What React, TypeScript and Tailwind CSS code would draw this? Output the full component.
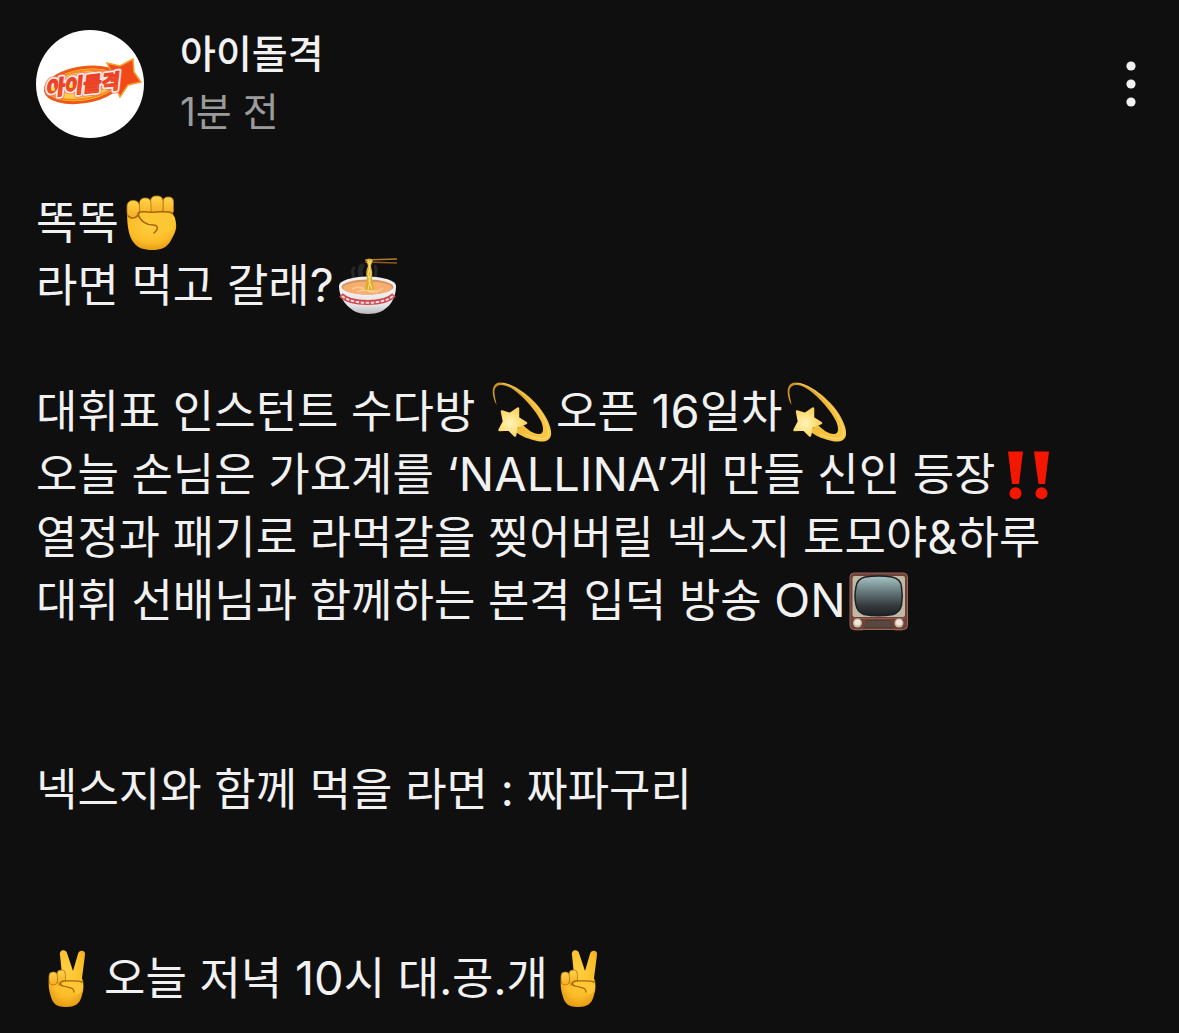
import type { ReactNode } from 'react';

function Emoji({ label, children }: { label: string; children: ReactNode }) {
  return (
    <svg
      role="img"
      aria-label={label}
      viewBox="0 0 63 63"
      className="mr-1 ml-px inline-block h-[63px] w-[63px] align-top"
    >
      {children}
    </svg>
  );
}

// Latin letters and digits run slightly larger than the Hangul around them
function Latin({ children }: { children: ReactNode }) {
  return <span className="text-[47px] leading-none">{children}</span>;
}

function Defs() {
  return (
    <svg className="absolute h-0 w-0" aria-hidden="true">
      <defs>
        <radialGradient id="skin" cx="0.5" cy="0.35" r="0.7">
          <stop offset="0" stopColor="#ffd043" />
          <stop offset="0.65" stopColor="#fcbd28" />
          <stop offset="1" stopColor="#e39512" />
        </radialGradient>
        <linearGradient id="finger" x1="0" y1="0" x2="0" y2="1">
          <stop offset="0" stopColor="#ffd54c" />
          <stop offset="1" stopColor="#f4ac20" />
        </linearGradient>
        <linearGradient id="tail" x1="0" y1="0" x2="1" y2="1">
          <stop offset="0" stopColor="#c98d1f" />
          <stop offset="0.5" stopColor="#f0b935" />
          <stop offset="1" stopColor="#fbcb4b" />
        </linearGradient>
        <radialGradient id="star" cx="0.4" cy="0.55" r="0.6">
          <stop offset="0" stopColor="#fff3bd" />
          <stop offset="0.5" stopColor="#ffe487" />
          <stop offset="1" stopColor="#fad05a" />
        </radialGradient>
        <linearGradient id="bowl" x1="0" y1="0" x2="0" y2="1">
          <stop offset="0" stopColor="#f4f4f4" />
          <stop offset="0.7" stopColor="#e3e3e5" />
          <stop offset="1" stopColor="#b9b9be" />
        </linearGradient>
        <linearGradient id="screen" x1="0" y1="0" x2="0" y2="1">
          <stop offset="0" stopColor="#a9c6c8" />
          <stop offset="0.35" stopColor="#6d8285" />
          <stop offset="0.75" stopColor="#34393c" />
          <stop offset="1" stopColor="#1f2224" />
        </linearGradient>
        <linearGradient id="lettering" x1="0" y1="0" x2="0" y2="1">
          <stop offset="0" stopColor="#e8322a" />
          <stop offset="1" stopColor="#f4601c" />
        </linearGradient>
      </defs>
    </svg>
  );
}

function Fist() {
  return (
    <Emoji label="✊">
      <path
        d="M7 20C7 36 9 46 14 52C18 57 24 59 32 59C41 59 46 57 50 51C54 44 57 39 56 32C55 26 53 22 49 20Z"
        fill="url(#skin)"
      />
      <g fill="url(#finger)" stroke="#b87410" strokeWidth="0.8">
        <rect x="43" y="6" width="10.500" height="18" rx="4.500" />
        <rect x="30.500" y="5" width="12.500" height="18" rx="5" />
        <rect x="19.500" y="7" width="11.500" height="18" rx="5" />
        <rect x="7" y="9.500" width="12.500" height="17" rx="5.500" />
      </g>
      <path
        d="M20 24C20 19 26 20 34 21C42 21 52 20 55 27C56 32 54 38 50 41L39 42C41 37 39 35 35 35C29 34 20 30 20 24Z"
        fill="#fdc633"
      />
      <path
        d="M18 23C20 30 26 34 33 34C38 34 39 38 34 42M18 22C22 19 29 22 36 21C42 21 48 20 52 22M8 25C11 28 15 28 18 24"
        fill="none"
        stroke="#a9650c"
        strokeWidth="1.500"
        strokeLinecap="round"
      />
    </Emoji>
  );
}

function Noodles() {
  return (
    <Emoji label="🍜">
      <g transform="translate(2 0)">
        <g fill="none" stroke="#555" strokeLinecap="round" opacity="0.35">
          <path d="M17 14C13 17 18 20 16 24" strokeWidth="3" />
          <path d="M25 12C21 15 25 20 23 24" strokeWidth="5" />
          <path d="M38 12C41 16 37 20 39 24" strokeWidth="3" />
        </g>
        <path
          d="M2 32C2 45 11 54 19 58C25 60.500 37 60.500 43 58C52 54 59 45 59 32Z"
          fill="url(#bowl)"
        />
        <ellipse cx="30.500" cy="32" rx="28.500" ry="9.500" fill="#f1f1f2" />
        <ellipse cx="30.500" cy="33" rx="26" ry="7.500" fill="#d8935f" />
        <ellipse cx="30.500" cy="34" rx="24.500" ry="6.500" fill="#f6ae70" />
        <path
          d="M15 35Q22 31 29 36T46 34M20 38Q29 34 41 38"
          fill="none"
          stroke="#ffcb8c"
          strokeWidth="1.500"
        />
        <path d="M4 41C14 51 47 51 57 41" fill="none" stroke="#cf4650" strokeWidth="5" />
        <path
          d="M5 42C15 51 46 51 56 42"
          fill="none"
          stroke="#f0dcdc"
          strokeWidth="2"
          strokeDasharray="3.500 1.500"
        />
        <path d="M28 6L60 5" stroke="#b47a32" strokeWidth="1.600" />
        <path d="M28 8L60 9" stroke="#8d5a21" strokeWidth="1.600" />
        <path
          d="M29 6Q32 3 36 6L34 12Q36 18 35 24L37 36H28L30 24Q28 18 31 12Z"
          fill="#d9ac2c"
        />
        <path
          d="M31 6L33 13L31 20L33 27L31 36M34 6L32 13L34 20L32 27L35 35"
          fill="none"
          stroke="#f8e27a"
          strokeWidth="1.100"
        />
      </g>
    </Emoji>
  );
}

function Dizzy() {
  return (
    <Emoji label="💫">
      <g transform="translate(1 0)">
        <path
          d="M6.500 25C1 15 1 3 10 2.500C22 2 39 15 49 27C57 37 62 48 61 55C60 61 54 62.500 47 61C39 59 32 57 26 52L31 43C38 50 43 54 49 54C54 54 54 48 51 41C46 31 35 18 24 10C15 3.500 6 3 4.500 10C4 16 6 20 6.500 25Z"
          fill="url(#tail)"
        />
        <path
          d="M12 3.500C24 4 40 18 49 30C56 40 60 51 58 56C55 61 43 58 35 54"
          fill="none"
          stroke="#ffe88c"
          strokeWidth="1"
          opacity="0.7"
        />
        <path
          d="M12 31.500L20 34L28 28.500L28 38L36 43L27 46.500L25 55.500L19 49.500L9.500 50L14 41.500Z"
          fill="url(#star)"
          stroke="url(#star)"
          strokeWidth="2.500"
          strokeLinejoin="round"
        />
      </g>
    </Emoji>
  );
}

function DoubleBang() {
  return (
    <Emoji label="‼️">
      <g fill="#f51600">
        <path d="M11 8.500H26L22 41H15Z" />
        <path d="M37 8.500H52L48 41H41.500Z" />
        <circle cx="18.500" cy="50.300" r="6" />
        <circle cx="44.500" cy="50.300" r="6" />
      </g>
    </Emoji>
  );
}

function Television() {
  return (
    <Emoji label="📺">
      <rect x="7" y="58" width="9" height="4" rx="1.500" fill="#4b2822" />
      <rect x="47" y="58" width="9" height="4" rx="1.500" fill="#4b2822" />
      <rect x="3" y="4" width="57.500" height="56.500" rx="4" fill="#6f4138" stroke="#94675c" />
      <rect x="5.500" y="7" width="52.500" height="41" rx="2" fill="#bfb8a2" />
      <path
        d="M18 8Q32 6 45 8Q54 10 54.500 18Q56 27 54.500 36Q53 43 46 45.500Q31 48 17 45.500Q10 43 9 36Q7 27 9 18Q10 10 18 8Z"
        fill="url(#screen)"
        stroke="#1c2022"
        strokeWidth="1.500"
      />
      <path d="M5 49.500H58" stroke="#94594c" strokeWidth="1" />
      <path d="M20 51H43L46 59H17Z" fill="#493b33" />
      <path d="M20 53H43M19 55H44M18 57H45" stroke="#76665a" strokeWidth="0.700" />
      <circle cx="10.500" cy="54" r="4.500" fill="#c9bfa8" />
      <circle cx="10.500" cy="53.500" r="3" fill="#eee9da" />
      <circle cx="52" cy="54" r="4.500" fill="#c9bfa8" />
      <circle cx="52" cy="53.500" r="3" fill="#eee9da" />
    </Emoji>
  );
}

function Victory() {
  return (
    <Emoji label="✌️">
      <g transform="translate(-2 0)">
        <path
          d="M25 8C24 2 31 2 32 6L38 24L43 7C44 2 51 3 50 8L47 31C49 36 49 43 47 48C45 57 40 60 31 60C22 60 18 57 16 50C14 44 13 38 14 32L27 28Z"
          fill="url(#skin)"
        />
        <g fill="url(#finger)" stroke="#b87410" strokeWidth="0.800">
          <rect x="22" y="23" width="8.500" height="14" rx="4" />
          <rect x="14" y="25" width="8.500" height="13" rx="4" />
        </g>
        <path
          d="M25 37C25 33 30 33 35 34C42 34 47 34 48 38C48 44 45 47 41 48L37 43C34 40 25 42 25 37Z"
          fill="#fdc633"
        />
        <path
          d="M48 35C41 33 35 34 29 34C25 34 24 38 28 39C34 41 39 40 39 45M24 38L26 37"
          fill="none"
          stroke="#a9650c"
          strokeWidth="1.300"
          strokeLinecap="round"
        />
      </g>
    </Emoji>
  );
}

function Avatar() {
  return (
    <svg
      viewBox="0 0 108 108"
      role="img"
      aria-label="아이돌격"
      className="h-[108px] w-[108px] shrink-0 rounded-full bg-white"
    >
      <g transform="rotate(-9 46 55)" fill="none">
        <ellipse cx="47" cy="55" rx="38" ry="17" fill="#ffcf4a" stroke="#ee5a16" strokeWidth="3" />
        <ellipse cx="47" cy="55" rx="35" ry="14" stroke="#f58a20" strokeWidth="2" />
      </g>
      <path
        d="M71 33L84 36L97 29L98 42L105 52L92 55L84 67L80 58L72 50L76 43Z"
        fill="#f04a18"
        stroke="#f9a02c"
        strokeWidth="1.500"
      />
      <g
        transform="rotate(-6 46 55) translate(12 0) skewX(-12)"
        className="font-['Noto_Sans_CJK_KR',sans-serif] text-[20px] font-black"
        textAnchor="middle"
        strokeLinejoin="round"
      >
        <text x="47" y="62" fill="#f0705a" stroke="#f0705a" strokeWidth="6">
          아이돌격
        </text>
        <text x="47" y="62" fill="#ffe9e0" stroke="#ffe9e0" strokeWidth="4.500">
          아이돌격
        </text>
        <text x="47" y="62" fill="url(#lettering)" stroke="#e8402a" strokeWidth="1">
          아이돌격
        </text>
      </g>
      <circle cx="17" cy="59" r="2" fill="#ffe14a" />
      <circle cx="35" cy="56" r="2" fill="#ffe14a" />
    </svg>
  );
}

export default function App() {
  return (
    <main className="min-h-screen bg-[#0f0f0f] font-[Inter,'Noto_Sans_CJK_KR',sans-serif] text-[#f1f1f1]">
      <Defs />
      <article className="px-9 pt-[26px]">
        <header className="flex items-center gap-9">
          <Avatar />
          <div className="grow">
            <h1 className="text-[39px] leading-[55px] font-medium">아이돌격</h1>
            <p className="text-[39px] leading-[61px] text-[#9b9b9b]">1분 전</p>
          </div>
          <button type="button" aria-label="더보기" className="flex h-14 w-6 items-center justify-center">
            <svg viewBox="0 0 10 46" className="h-[46px] w-[10px]" fill="currentColor">
              <circle cx="5" cy="5" r="4.600" />
              <circle cx="5" cy="23" r="4.600" />
              <circle cx="5" cy="41" r="4.600" />
            </svg>
          </button>
        </header>

        <div className="mt-[49px] text-[45px] leading-[63px]">
          <p>
            똑똑
            <Fist />
            <br />
            라면 먹고 갈래<Latin>?</Latin>
            <Noodles />
          </p>
          <p className="mt-[63px]">
            대휘표 인스턴트 수다방 <Dizzy />
            오픈 <Latin>16</Latin>일차
            <Dizzy />
            <br />
            오늘 손님은 가요계를 <Latin>‘NALLINA’</Latin>게 만들 신인 등장
            <DoubleBang />
            <br />
            열정과 패기로 라먹갈을 찢어버릴 넥스지 토모야<Latin>&amp;</Latin>하루
            <br />
            대휘 선배님과 함께하는 본격 입덕 방송 <Latin>ON</Latin>
            <Television />
          </p>
          <p className="mt-[126px]">넥스지와 함께 먹을 라면 : 짜파구리</p>
          <p className="mt-[126px]">
            <Victory />
            오늘 저녁 <Latin>10</Latin>시 대.공.개
            <Victory />
          </p>
        </div>
      </article>
    </main>
  );
}
